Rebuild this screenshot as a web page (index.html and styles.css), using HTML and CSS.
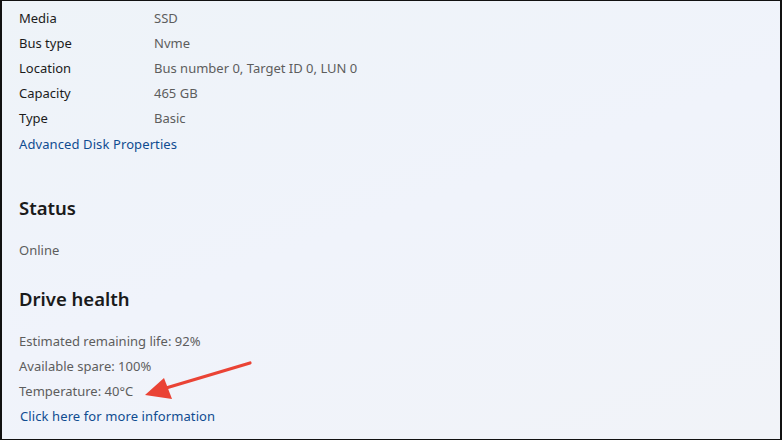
FILE: index.html
```html
<!DOCTYPE html>
<html>
<head>
<meta charset="utf-8">
<link rel="stylesheet" href="styles.css">
</head>
<body>
<div class="frame">
  <div class="props">
    <div class="row"><span class="label">Media</span><span class="value">SSD</span></div>
    <div class="row"><span class="label">Bus type</span><span class="value">Nvme</span></div>
    <div class="row"><span class="label">Location</span><span class="value">Bus number 0, Target ID 0, LUN 0</span></div>
    <div class="row"><span class="label">Capacity</span><span class="value">465 GB</span></div>
    <div class="row"><span class="label">Type</span><span class="value">Basic</span></div>
    <div class="row link-row"><a class="link">Advanced Disk Properties</a></div>
  </div>
  <h2 class="heading status-h">Status</h2>
  <div class="line muted online">Online</div>
  <h2 class="heading health-h">Drive health</h2>
  <div class="health">
    <div class="line muted">Estimated remaining life: 92%</div>
    <div class="line muted">Available spare: 100%</div>
    <div class="line muted">Temperature: 40°C</div>
    <div class="line"><a class="link">Click here for more information</a></div>
  </div>
  <svg class="arrow" width="782" height="440" viewBox="0 0 782 440">
    <line x1="250" y1="363" x2="166" y2="388" stroke="#ea4335" stroke-width="3.2" stroke-linecap="round"/>
    <polygon points="145,395 164,378 172,399" fill="#ea4335"/>
  </svg>
</div>
</body>
</html>
```
FILE: styles.css
```css
html, body {
  margin: 0;
  padding: 0;
}
body {
  width: 782px;
  height: 440px;
  overflow: hidden;
  background: #eff3fa;
  font-family: "Noto Sans", "Open Sans", sans-serif;
}
.frame {
  position: relative;
  box-sizing: border-box;
  width: 782px;
  height: 440px;
  border-style: solid;
  border-color: #111;
  border-width: 1px 2px 1px 2px;
  background: linear-gradient(160deg, #eef3f8 0%, #f0f3fb 50%, #f1f3f8 100%);
  padding: 5px 0 0 17px;
  font-size: 13px;
  color: #1b1b1b;
}
.props {
  display: flex;
  flex-direction: column;
}
.row {
  display: grid;
  grid-template-columns: 135px 1fr;
  height: 25px;
  line-height: 25px;
}
.row .link {
  grid-column: 1 / 3;
}
.link-row {
  margin-top: 1px;
}
.value {
  color: #5d5d5d;
}
.link {
  color: #0f4c91;
  cursor: pointer;
  letter-spacing: 0.1px;
}
.heading {
  margin: 0;
  font-size: 18.5px;
  font-weight: 600;
  line-height: 28px;
  color: #1a1a1a;
}
.status-h {
  margin-top: 37px;
}
.line {
  height: 25px;
  line-height: 25px;
}
.muted {
  color: #5d5d5d;
}
.online {
  margin-top: 16px;
}
.health-h {
  margin-top: 22px;
}
.health {
  margin-top: 16px;
}
.health .link {
  margin-left: 1px;
}
.arrow {
  position: absolute;
  left: -2px;
  top: -1px;
  pointer-events: none;
}
```
